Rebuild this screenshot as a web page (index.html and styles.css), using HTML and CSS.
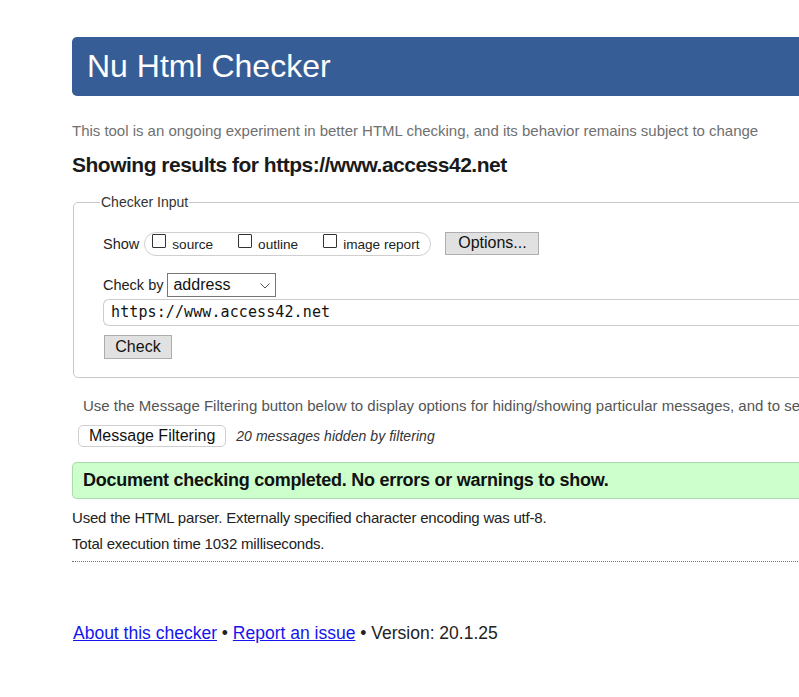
FILE: index.html
```html
<!DOCTYPE html>
<html lang="en">
<head>
<meta charset="utf-8">
<title>Nu Html Checker</title>
<link rel="stylesheet" href="styles.css">
</head>
<body>
<div class="page">
  <h1 class="banner">Nu Html Checker</h1>
  <p class="intro">This tool is an ongoing experiment in better HTML checking, and its behavior remains subject to change</p>
  <h2 class="results">Showing results for https://www.access42.net</h2>

  <fieldset class="input-box">
    <legend>Checker Input</legend>
    <div class="row show-row">
      <span class="label">Show</span>
      <span class="pill">
        <label class="opt"><span class="box"></span>source</label>
        <label class="opt"><span class="box"></span>outline</label>
        <label class="opt"><span class="box"></span>image report</label>
      </span>
      <span class="btn gray-btn options">Options...</span>
    </div>
    <div class="row by-row">
      <span class="label">Check by</span>
      <span class="select">address<svg class="chev" width="10" height="6" viewBox="0 0 10 6"><path d="M0.5 0.5 L5 5 L9.5 0.5" fill="none" stroke="#555" stroke-width="1"/></svg></span>
    </div>
    <div class="url">https://www.access42.net</div>
    <div class="row"><span class="btn gray-btn check">Check</span></div>
  </fieldset>

  <div class="filter-wrap">
    <p class="filter-note">Use the Message Filtering button below to display options for hiding/showing particular messages, and to see total counts of errors and warnings.</p>
  </div>
  <div class="filter-row">
    <span class="btn white-btn">Message Filtering</span>
    <em class="hidden-count">20 messages hidden by filtering</em>
  </div>

  <div class="success">Document checking completed. No errors or warnings to show.</div>
  <p class="meta">Used the HTML parser. Externally specified character encoding was utf-8.</p>
  <p class="meta">Total execution time 1032 milliseconds.</p>
  <hr class="dots">

  <p class="footer"><a href="#">About this checker</a> • <a href="#">Report an issue</a> • Version: 20.1.25</p>
</div>
</body>
</html>
```

FILE: styles.css
```css
html, body {
  margin: 0;
  padding: 0;
  background: #fff;
  overflow: hidden;
}
body {
  font-family: "Liberation Sans", Arial, sans-serif;
  color: #222;
}
.page {
  margin-left: 72px;
  width: 900px;
  padding-top: 37px;
}
.banner {
  margin: 0;
  height: 59px;
  line-height: 59px;
  padding-left: 15px;
  background: #365d96;
  color: #fff;
  font-size: 32px;
  font-weight: normal;
  border-radius: 5px;
}
.intro {
  margin: 25px 0 0;
  font-size: 15px;
  line-height: 20px;
  letter-spacing: -0.02px;
  color: #707070;
}
.results {
  margin: 12px 0 0;
  font-size: 21px;
  line-height: 24px;
  letter-spacing: -0.5px;
  font-weight: bold;
  color: #1a1a1a;
}
.input-box {
  margin: 16px 0 0 1px;
  padding: 10px 0 18px 29px;
  border: 1px solid #c8c8c8;
  border-radius: 5px;
  min-width: 0;
}
.input-box legend {
  font-size: 14px;
  line-height: 18px;
  padding: 0 1px;
  margin-left: -3px;
  color: #333;
}
.row {
  display: flex;
  align-items: center;
}
.label {
  font-size: 14.5px;
  color: #222;
}
.show-row {
  height: 26px;
  margin-top: 10px;
}
.pill {
  display: flex;
  align-items: center;
  height: 22px;
  margin-left: 5px;
  padding: 0 11px 0 7px;
  border: 1px solid #cfcfcf;
  border-radius: 12px;
  font-size: 13.6px;
  color: #222;
}
.opt {
  display: flex;
  align-items: center;
  margin-right: 25px;
}
.opt:last-child { margin-right: 0; }
.box {
  width: 12px;
  height: 12px;
  border: 1px solid #333;
  border-radius: 1px;
  margin-right: 6px;
  margin-top: -6px;
  background: #fff;
}
.btn {
  display: inline-flex;
  align-items: center;
  justify-content: center;
  font-size: 16px;
  color: #111;
  box-sizing: border-box;
}
.gray-btn {
  background: #e1e1e1;
  border: 1px solid #adadad;
}
.options {
  width: 94px;
  height: 23px;
  margin-left: 14px;
  margin-top: -2px;
}
.by-row {
  margin-top: 16px;
  height: 24px;
}
.select {
  display: inline-flex;
  align-items: center;
  justify-content: space-between;
  box-sizing: border-box;
  width: 109px;
  height: 24px;
  margin-left: 4px;
  padding: 0 5px 0 5px;
  border: 1px solid #767676;
  font-size: 16px;
  color: #111;
}
.chev { margin-top: 1px; }
.url {
  margin-top: 2px;
  height: 27px;
  box-sizing: border-box;
  border: 1px solid #cccccc;
  border-right: none;
  border-radius: 6px 0 0 6px;
  padding-left: 7px;
  line-height: 25px;
  font-family: "DejaVu Sans Mono", monospace;
  font-size: 15px;
  letter-spacing: 0.1px;
  color: #111;
}
.check {
  width: 68px;
  height: 24px;
  margin-top: 9px;
  margin-left: 1px;
}
.filter-wrap {
  overflow: hidden;
}
.filter-note {
  margin: 18px 0 0 11px;
  font-size: 15px;
  line-height: 20px;
  color: #555;
  white-space: nowrap;
}
.filter-row {
  display: flex;
  align-items: center;
  margin-top: 9px;
  margin-left: 6px;
}
.white-btn {
  height: 22px;
  padding: 0 10px;
  background: #fff;
  border: 1px solid #cfcfcf;
  border-radius: 5px;
  font-size: 16px;
}
.hidden-count {
  margin-left: 10px;
  font-size: 14px;
  letter-spacing: 0.05px;
  color: #333;
}
.success {
  margin-top: 15px;
  height: 37px;
  box-sizing: border-box;
  padding-left: 10px;
  line-height: 35px;
  background: #ccffcc;
  border: 1px solid #aadcaa;
  border-right: none;
  border-radius: 5px 0 0 5px;
  font-size: 18px;
  letter-spacing: -0.27px;
  font-weight: bold;
  color: #111;
}
.meta {
  margin: 10px 0 0;
  font-size: 15px;
  letter-spacing: -0.2px;
  line-height: 18px;
  color: #222;
}
.meta + .meta { margin-top: 8px; }
.dots {
  margin: 8px 0 0;
  border: none;
  border-top: 1px dotted #777;
  height: 0;
}
.footer {
  margin: 60px 0 0 1px;
  font-size: 17.5px;
  line-height: 22px;
  color: #222;
}
.footer a {
  color: #1515ee;
  text-decoration: underline;
}
```
